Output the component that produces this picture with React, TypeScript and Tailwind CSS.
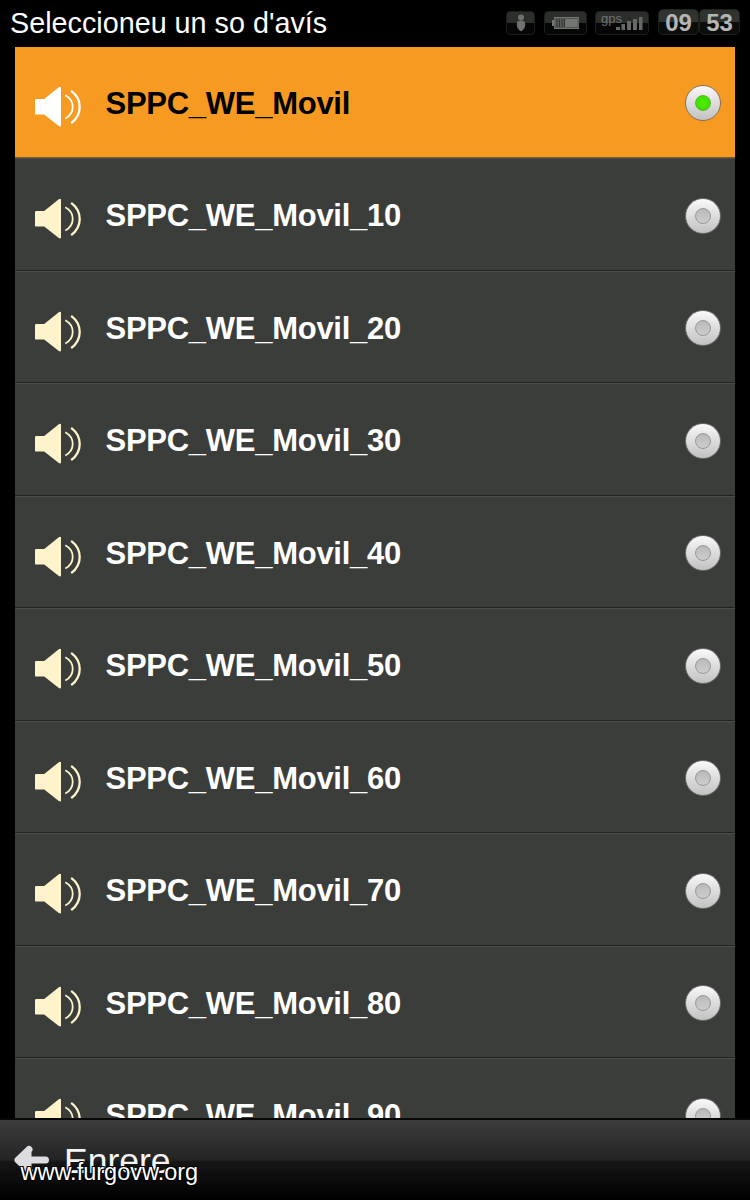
import React from "react";

const sounds = ["", "_10", "_20", "_30", "_40", "_50", "_60", "_70", "_80", "_90"].map(
  (suffix) => `SPPC_WE_Movil${suffix}`,
);

function Speaker({ active }: { active: boolean }) {
  const color = active ? "#ffffff" : "#fff3cc";
  return (
    <svg className="h-[42px] w-[50px] shrink-0" viewBox="0 0 50 42" fill="none">
      <path d="M0 14.2Q0 13 1.2 13H9.2L23.8 1.2Q26 0 26 2V39.2Q26 41.2 23.8 40L9.2 28.6H1.2Q0 28.6 0 27.4Z" fill={color} />
      <path d="M30.3 9.3Q37.7 13.3 37.7 21Q37.7 28.5 30.3 32.5" stroke={color} strokeWidth="1.8" />
      <path d="M36.2 4.8Q44.7 11.2 44.7 21Q44.7 30.8 36.2 37.2" stroke={color} strokeWidth="2.3" />
    </svg>
  );
}

function Radio({ active }: { active: boolean }) {
  return (
    <span
      className={`flex size-[36px] shrink-0 items-center justify-center rounded-full border bg-linear-to-b from-[#faf8fa] to-[#c2c2c2] ${active ? "border-[#86705a]" : "border-[#6c6d6b]"}`}
    >
      <span
        className={`size-[16px] rounded-full border ${active ? "border-[#5cb52d] bg-[radial-gradient(circle,#4ff100,#38d600)]" : "border-[#989898] bg-linear-to-b from-[#b9b9b9] to-[#cdcdcd]"}`}
      />
    </span>
  );
}

function StatusIcons() {
  const chip =
    "flex h-[24px] items-center justify-center rounded-[4px] border border-[#182018] bg-[linear-gradient(#2b2e2b_0_48%,#050605_48%)]";
  const clock =
    "flex h-[26px] w-[41px] items-center justify-center rounded-[5px] border border-[#1b221b] bg-[linear-gradient(#303330_0_50%,#0b0d0b_50%)] pt-[2px] font-bold text-[24px] leading-none text-[#b5b5b5]";
  return (
    <div className="flex items-end pt-[9px]">
      <div className={`${chip} w-[29px]`}>
        <svg width="12" height="20" viewBox="0 0 12 20" fill="#707270">
          <circle cx="6" cy="4.6" r="3" />
          <path d="M2.5 8.5Q6 6.5 9.5 8.5Q11 11 9.5 15L7 18H5L2.5 15Q1 11 2.5 8.5Z" />
        </svg>
      </div>
      <div className={`${chip} ml-[9px] w-[43px]`}>
        <svg width="28" height="14" viewBox="0 0 28 14">
          <path d="M0 4H2V1H27V13H2V10H0Z" fill="#747674" />
          <path d="M3.5 2H13V12H3.5Z" fill="#5b5d5b" />
          <path d="M5 2V12M7.5 2V12M10 2V12M12.5 2V12" stroke="#2d302d" />
          <path d="M3 2.5H26V11.5H3Z" stroke="#505250" fill="none" />
        </svg>
      </div>
      <div className={`${chip} ml-[8px] w-[54px]`}>
        <span className="-mt-[9px] text-[13px] leading-none text-[#717371]">gps</span>
        <svg className="-ml-[6px]" width="27" height="16" viewBox="0 0 27 16">
          <path d="M0 12H4V15H0ZM5.5 9H9V15H5.5ZM11 6H15V15H11ZM17 4H21V15H17ZM23 2H26.5V15H23Z" fill="#666866" />
        </svg>
      </div>
      <div className={`${clock} ml-[9px]`}>09</div>
      <div className={clock}>53</div>
    </div>
  );
}

export default function App() {
  return (
    <main className="relative flex h-[1200px] w-[750px] flex-col overflow-hidden bg-black font-['Liberation_Sans',sans-serif]">
      <header className="flex h-[47px] shrink-0 items-start justify-between px-[10px]">
        <h1 className="pt-[6px] text-[28.75px] leading-[34px] whitespace-nowrap text-white">Seleccioneu un so d'avís</h1>
        <StatusIcons />
      </header>
      <section className="mx-[15px] h-[1071px] shrink-0 overflow-hidden">
        <ul className="-mt-[1.5px]">
          {sounds.map((sound, i) => (
            <li
              key={sound}
              className={`flex h-[112.5px] border-b px-[14px] ${i === 0 ? "border-[#775b31] bg-[#f79a22] text-black" : "border-[#202320] bg-[#3b3d3a] text-white shadow-[inset_0_1px_#4b4d4a]"}`}
            >
              <div className="w-[76.5px] shrink-0 pt-[40px] pl-[6px]">
                <Speaker active={i === 0} />
              </div>
              <span className="flex-1 pt-[40px] text-[31px] leading-[36px] font-bold tracking-[-0.27px] whitespace-nowrap">{sound}</span>
              <div className="pt-[39.5px]">
                <Radio active={i === 0} />
              </div>
            </li>
          ))}
        </ul>
      </section>
      <footer className="flex h-[82px] items-start border-t-2 border-[#080808] bg-[linear-gradient(#3d3c3d_0%,#252425_50%,#171617_52%,#000_100%)] pl-[14px]">
        <svg className="mt-[24px] h-[34px] w-[36px]" viewBox="0 0 36 34" fill="none" stroke="#dddce0" strokeWidth="7" strokeLinecap="round" strokeLinejoin="round">
          <path d="M15 5.5L4 16L15 26.5M5 16H31.5M14 8V24" />
        </svg>
        <span className="mt-[21px] ml-[14px] text-[35.5px] leading-[40px] text-[#f4f4f4]">Enrere</span>
      </footer>
      <span className="absolute top-[1158px] left-[20.5px] text-[23.5px] leading-[28px] whitespace-nowrap text-white [text-shadow:1px_1px_#000,-1px_-1px_#000,1px_-1px_#000,-1px_1px_#000]">
        www.furgovw.org
      </span>
    </main>
  );
}
